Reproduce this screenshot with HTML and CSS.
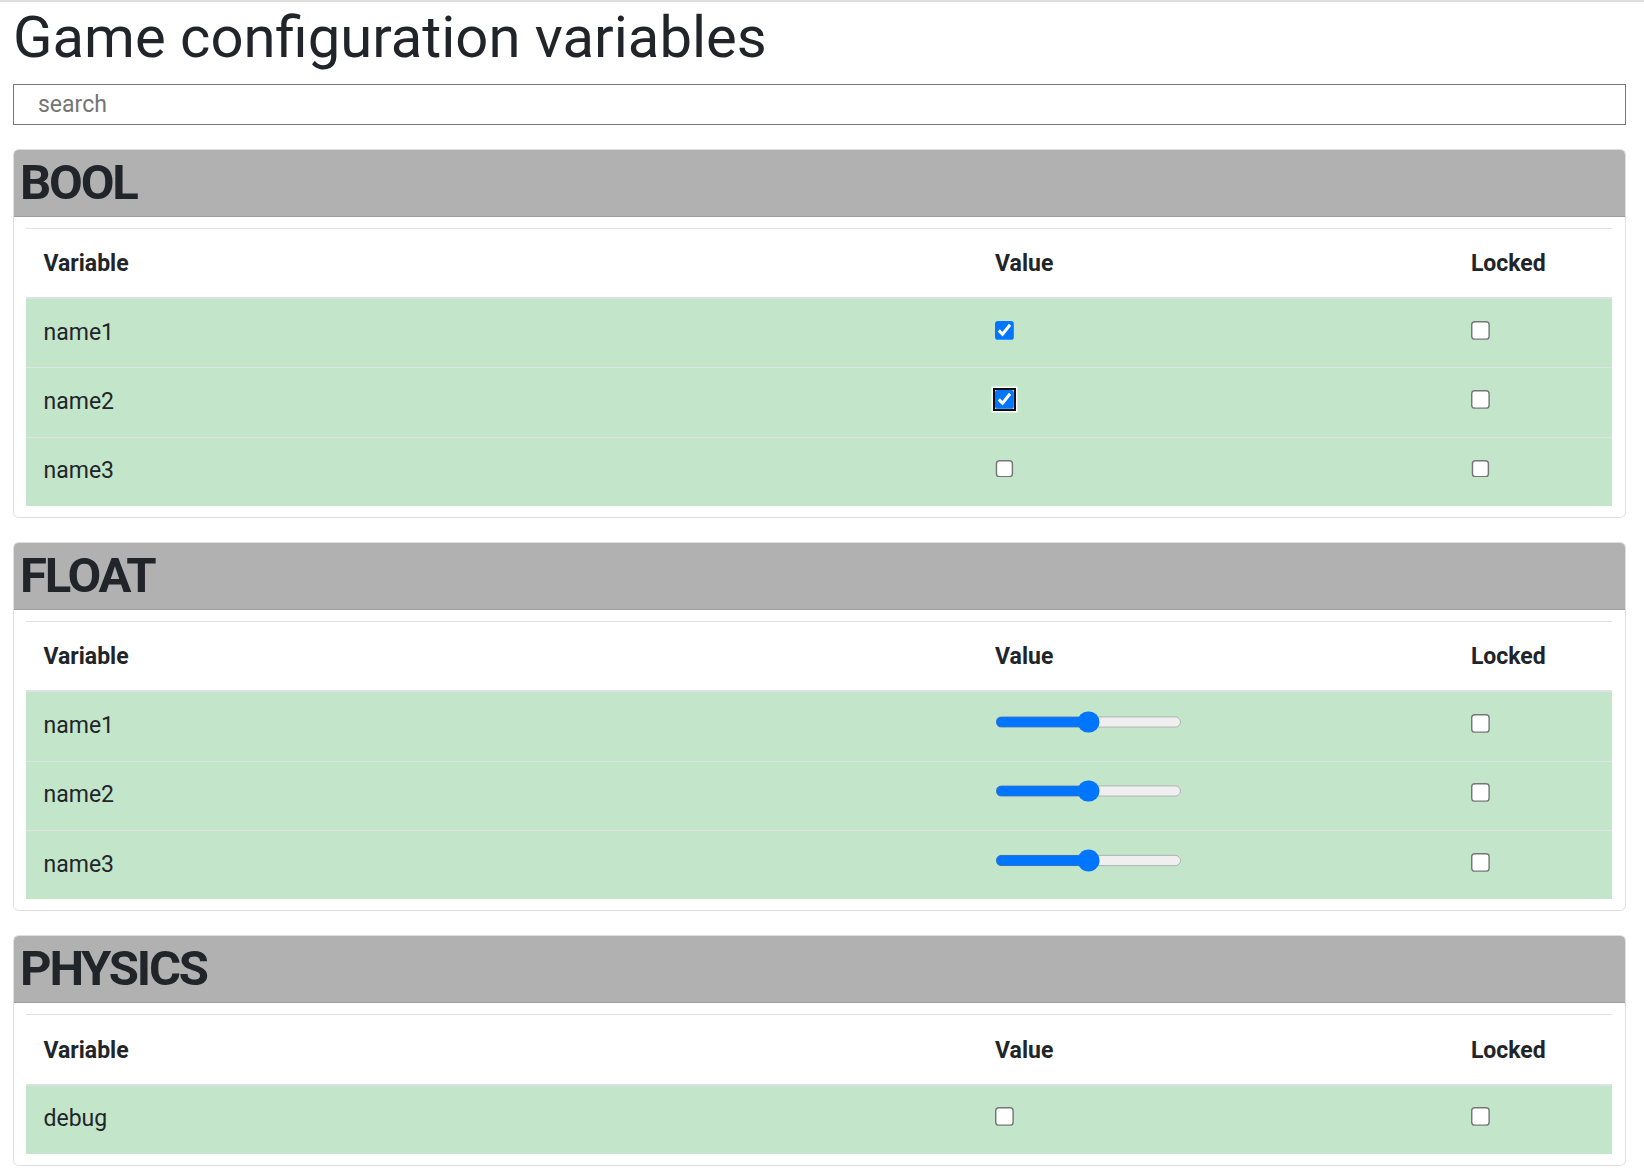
FILE: index.html
```html
<!DOCTYPE html>
<html lang="en">
<head>
<meta charset="utf-8">
<title>Game configuration variables</title>
<link rel="stylesheet" href="styles.css">
</head>
<body>
<div class="page">
  <h1 class="title">Game configuration variables</h1>
  <input class="search" type="text" placeholder="search">

  <section class="card">
    <header class="card-header"><h2>BOOL</h2></header>
    <div class="card-body">
      <table class="vars">
        <colgroup><col class="c-var"><col class="c-val"><col class="c-lock"></colgroup>
        <thead><tr><th>Variable</th><th>Value</th><th>Locked</th></tr></thead>
        <tbody>
          <tr><td>name1</td><td><input class="check" type="checkbox" checked></td><td><input class="check" type="checkbox"></td></tr>
          <tr><td>name2</td><td><input class="check focus" type="checkbox" checked></td><td><input class="check" type="checkbox"></td></tr>
          <tr><td>name3</td><td><input class="check" type="checkbox"></td><td><input class="check" type="checkbox"></td></tr>
        </tbody>
      </table>
    </div>
  </section>

  <section class="card">
    <header class="card-header"><h2>FLOAT</h2></header>
    <div class="card-body">
      <table class="vars">
        <colgroup><col class="c-var"><col class="c-val"><col class="c-lock"></colgroup>
        <thead><tr><th>Variable</th><th>Value</th><th>Locked</th></tr></thead>
        <tbody>
          <tr><td>name1</td><td><input class="slider" type="range" min="0" max="100" value="50"></td><td><input class="check" type="checkbox"></td></tr>
          <tr><td>name2</td><td><input class="slider" type="range" min="0" max="100" value="50"></td><td><input class="check" type="checkbox"></td></tr>
          <tr><td>name3</td><td><input class="slider" type="range" min="0" max="100" value="50"></td><td><input class="check" type="checkbox"></td></tr>
        </tbody>
      </table>
    </div>
  </section>

  <section class="card">
    <header class="card-header"><h2>PHYSICS</h2></header>
    <div class="card-body">
      <table class="vars">
        <colgroup><col class="c-var"><col class="c-val"><col class="c-lock"></colgroup>
        <thead><tr><th>Variable</th><th>Value</th><th>Locked</th></tr></thead>
        <tbody>
          <tr><td>debug</td><td><input class="check" type="checkbox"></td><td><input class="check" type="checkbox"></td></tr>
        </tbody>
      </table>
    </div>
  </section>
</div>
</body>
</html>
```
FILE: styles.css
```css
html, body {
  margin: 0;
  padding: 0;
  background: #fff;
}

body {
  border-top: 2px solid #dedede;
  font-family: Roboto, "Noto Sans", "Liberation Sans", sans-serif;
  color: #212529;
  font-size: 23px;
  line-height: 33.6px;
}

.page {
  padding: 0 18px 0 13px;
}

.title {
  font-size: 58px;
  font-weight: 400;
  line-height: 1.2;
  margin: 1px 0 11px;
  color: #212529;
}

.search {
  display: block;
  box-sizing: border-box;
  width: 100%;
  height: 41px;
  margin: 0;
  padding: 0 0 0 24px;
  border: 1px solid #767676;
  border-radius: 0;
  font-family: Roboto, "Noto Sans", sans-serif;
  font-size: 23px;
  color: #212529;
  background: #fff;
}

.search::placeholder {
  color: #757575;
}

.card {
  margin-top: 24px;
  border: 1px solid #dfdfdf;
  border-radius: 5.6px;
  overflow: hidden;
  background: #fff;
}

.card-header {
  background: #b1b1b1;
  border-bottom: 1px solid #9d9d9d;
}

.card-header h2 {
  margin: 0;
  padding-left: 6px;
  font-size: 49px;
  font-weight: 700;
  line-height: 66px;
  letter-spacing: -2.2px;
  color: #212529;
}

.card-body {
  padding: 11px 13px 11px 12px;
}

.vars {
  width: 100%;
  border-collapse: collapse;
  table-layout: fixed;
}

.c-var { width: 60%; }
.c-val { width: 30%; }
.c-lock { width: 10%; }

.vars th,
.vars td {
  padding: 16.8px 16.8px 16.8px 17.5px;
  text-align: left;
  vertical-align: top;
  border-top: 1px solid #dee2e6;
}

.vars th {
  padding-top: 18.3px;
  padding-bottom: 16.3px;
  font-weight: 700;
  vertical-align: bottom;
  border-bottom: 2px solid #dee2e6;
}

.vars tbody tr {
  background: #c3e6cb;
}

.vars tbody td {
  height: 34.8px;
}

.check {
  zoom: 1.45;
  margin: 0;
  vertical-align: baseline;
}

.check.focus {
  outline: 1.6px solid #101010;
  outline-offset: 0.5px;
  box-shadow: 0 0 0 2.4px #fff;
  border-radius: 2px;
}

.slider {
  zoom: 1.4;
  width: 133.5px;
  margin: 0;
  vertical-align: baseline;
}
```
